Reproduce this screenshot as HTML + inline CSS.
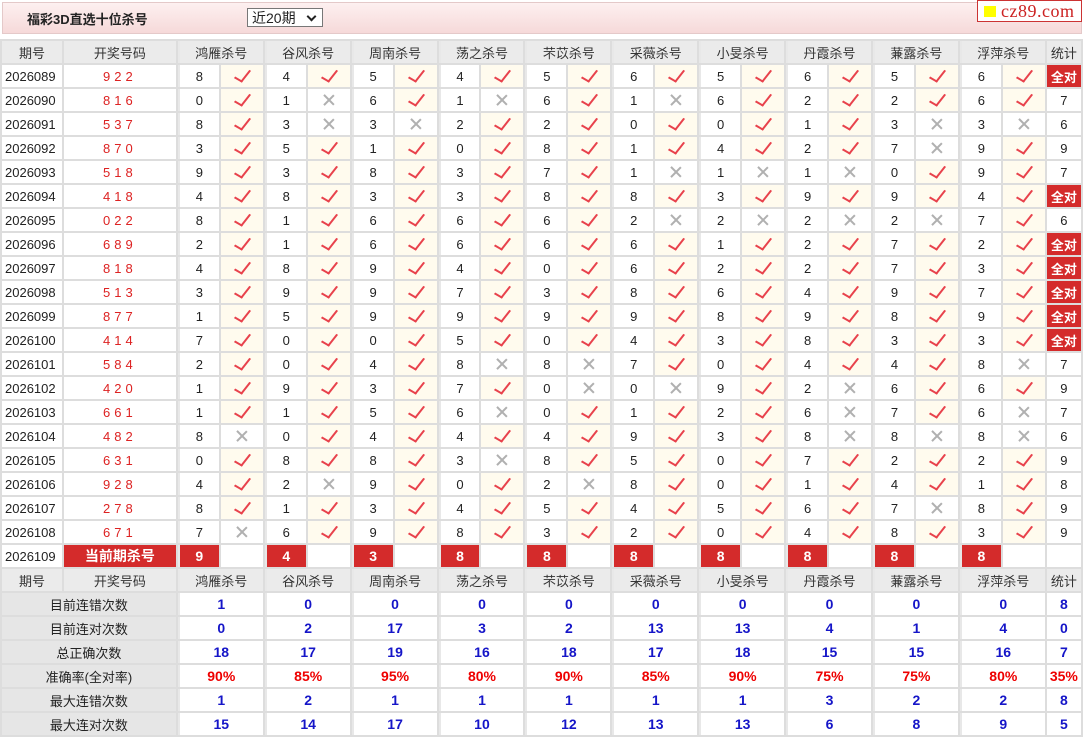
<!DOCTYPE html>
<html><head><meta charset="utf-8"><style>
body{margin:0;width:1083px;height:743px;background:#fff;font-family:"Liberation Sans","Noto Sans CJK SC",sans-serif;font-size:13px;color:#222;position:relative;overflow:hidden}
.top{position:absolute;left:2px;top:2px;width:1078px;height:30px;background:linear-gradient(#fdf0f0,#f6d9d9);border:1px solid #e4c9c9}
.title{position:absolute;left:24px;top:6px;font-weight:bold;font-size:13px;color:#222}
.sel{position:absolute;left:244px;top:5px;width:76px;height:19px;border:1px solid #777;background:#fff;font-size:14px;line-height:19px;padding-left:4px;box-sizing:border-box}
.sel:after{content:"";position:absolute;right:7px;top:4px;width:5px;height:5px;border-right:2px solid #222;border-bottom:2px solid #222;transform:rotate(45deg)}
.logo{position:absolute;left:977px;top:0;width:105px;height:22px;border:1px solid #c33;background:#fff;box-sizing:border-box;font-family:"Liberation Serif",serif;font-size:18px;color:#c22;line-height:20px;padding-left:23px;letter-spacing:0.5px;white-space:nowrap;overflow:hidden}
.logo:before{content:"";position:absolute;left:6px;top:5px;width:12px;height:11px;background:#ff0}
table{position:absolute;left:0;top:39px;border-collapse:separate;border-spacing:2px;background:#ddd;table-layout:fixed}
td{height:22px;padding:0;background:#fff;text-align:center;white-space:nowrap;overflow:hidden;position:relative}
tr.h td{background:#ebebeb;color:#333}
td.p{text-align:left;padding-left:3px;background:#fff}
tr.h td.p{text-align:center;padding:0}
td.n{color:#d22;letter-spacing:4px}
td.g{border-left:2px solid #e8e8e8}
td.y{background:#fffbee}
td.y:before{content:"";position:absolute;left:17px;top:2px;width:7px;height:13px;border-right:2px solid #e8424c;border-bottom:2px solid #e8424c;transform:rotate(38deg) skewY(-8deg)}
td.x:before,td.x:after{content:"";position:absolute;left:20px;top:4px;width:1.5px;height:14px;background:#b0b0b0;transform:rotate(45deg)}
td.x:after{transform:rotate(-45deg)}
td.a{background:#d42b2b;color:#fff;font-weight:bold}
td.r{background:#d42b2b;color:#fff;font-weight:bold;font-size:14px}
td.l{background:#e6e6e6}
td.b{color:#1515c8;font-weight:bold;font-size:14px}
td.pc{color:#e00;font-weight:bold;font-size:14px}
</style></head><body>
<div class="top"><div class="title">福彩3D直选十位杀号</div><div class="sel">近20期</div></div>
<div class="logo">cz89.com</div>
<table>
<colgroup><col style="width:60px"><col style="width:112px"><col style="width:41px"><col style="width:42px"><col style="width:41px"><col style="width:42px"><col style="width:41px"><col style="width:42px"><col style="width:41px"><col style="width:42px"><col style="width:41px"><col style="width:42px"><col style="width:41px"><col style="width:42px"><col style="width:41px"><col style="width:42px"><col style="width:41px"><col style="width:42px"><col style="width:41px"><col style="width:42px"><col style="width:41px"><col style="width:42px"><col style="width:34px"></colgroup>
<tr class="h"><td class="p">期号</td><td>开奖号码</td><td colspan="2" class="g">鸿雁杀号</td><td colspan="2" class="g">谷风杀号</td><td colspan="2" class="g">周南杀号</td><td colspan="2" class="g">荡之杀号</td><td colspan="2" class="g">芣苡杀号</td><td colspan="2" class="g">采薇杀号</td><td colspan="2" class="g">小旻杀号</td><td colspan="2" class="g">丹霞杀号</td><td colspan="2" class="g">蒹露杀号</td><td colspan="2" class="g">浮萍杀号</td><td>统计</td></tr>
<tr><td class="p">2026089</td><td class="n">922</td><td class="g">8</td><td class="y"></td><td class="g">4</td><td class="y"></td><td class="g">5</td><td class="y"></td><td class="g">4</td><td class="y"></td><td class="g">5</td><td class="y"></td><td class="g">6</td><td class="y"></td><td class="g">5</td><td class="y"></td><td class="g">6</td><td class="y"></td><td class="g">5</td><td class="y"></td><td class="g">6</td><td class="y"></td><td class="a">全对</td></tr>
<tr><td class="p">2026090</td><td class="n">816</td><td class="g">0</td><td class="y"></td><td class="g">1</td><td class="x"></td><td class="g">6</td><td class="y"></td><td class="g">1</td><td class="x"></td><td class="g">6</td><td class="y"></td><td class="g">1</td><td class="x"></td><td class="g">6</td><td class="y"></td><td class="g">2</td><td class="y"></td><td class="g">2</td><td class="y"></td><td class="g">6</td><td class="y"></td><td>7</td></tr>
<tr><td class="p">2026091</td><td class="n">537</td><td class="g">8</td><td class="y"></td><td class="g">3</td><td class="x"></td><td class="g">3</td><td class="x"></td><td class="g">2</td><td class="y"></td><td class="g">2</td><td class="y"></td><td class="g">0</td><td class="y"></td><td class="g">0</td><td class="y"></td><td class="g">1</td><td class="y"></td><td class="g">3</td><td class="x"></td><td class="g">3</td><td class="x"></td><td>6</td></tr>
<tr><td class="p">2026092</td><td class="n">870</td><td class="g">3</td><td class="y"></td><td class="g">5</td><td class="y"></td><td class="g">1</td><td class="y"></td><td class="g">0</td><td class="y"></td><td class="g">8</td><td class="y"></td><td class="g">1</td><td class="y"></td><td class="g">4</td><td class="y"></td><td class="g">2</td><td class="y"></td><td class="g">7</td><td class="x"></td><td class="g">9</td><td class="y"></td><td>9</td></tr>
<tr><td class="p">2026093</td><td class="n">518</td><td class="g">9</td><td class="y"></td><td class="g">3</td><td class="y"></td><td class="g">8</td><td class="y"></td><td class="g">3</td><td class="y"></td><td class="g">7</td><td class="y"></td><td class="g">1</td><td class="x"></td><td class="g">1</td><td class="x"></td><td class="g">1</td><td class="x"></td><td class="g">0</td><td class="y"></td><td class="g">9</td><td class="y"></td><td>7</td></tr>
<tr><td class="p">2026094</td><td class="n">418</td><td class="g">4</td><td class="y"></td><td class="g">8</td><td class="y"></td><td class="g">3</td><td class="y"></td><td class="g">3</td><td class="y"></td><td class="g">8</td><td class="y"></td><td class="g">8</td><td class="y"></td><td class="g">3</td><td class="y"></td><td class="g">9</td><td class="y"></td><td class="g">9</td><td class="y"></td><td class="g">4</td><td class="y"></td><td class="a">全对</td></tr>
<tr><td class="p">2026095</td><td class="n">022</td><td class="g">8</td><td class="y"></td><td class="g">1</td><td class="y"></td><td class="g">6</td><td class="y"></td><td class="g">6</td><td class="y"></td><td class="g">6</td><td class="y"></td><td class="g">2</td><td class="x"></td><td class="g">2</td><td class="x"></td><td class="g">2</td><td class="x"></td><td class="g">2</td><td class="x"></td><td class="g">7</td><td class="y"></td><td>6</td></tr>
<tr><td class="p">2026096</td><td class="n">689</td><td class="g">2</td><td class="y"></td><td class="g">1</td><td class="y"></td><td class="g">6</td><td class="y"></td><td class="g">6</td><td class="y"></td><td class="g">6</td><td class="y"></td><td class="g">6</td><td class="y"></td><td class="g">1</td><td class="y"></td><td class="g">2</td><td class="y"></td><td class="g">7</td><td class="y"></td><td class="g">2</td><td class="y"></td><td class="a">全对</td></tr>
<tr><td class="p">2026097</td><td class="n">818</td><td class="g">4</td><td class="y"></td><td class="g">8</td><td class="y"></td><td class="g">9</td><td class="y"></td><td class="g">4</td><td class="y"></td><td class="g">0</td><td class="y"></td><td class="g">6</td><td class="y"></td><td class="g">2</td><td class="y"></td><td class="g">2</td><td class="y"></td><td class="g">7</td><td class="y"></td><td class="g">3</td><td class="y"></td><td class="a">全对</td></tr>
<tr><td class="p">2026098</td><td class="n">513</td><td class="g">3</td><td class="y"></td><td class="g">9</td><td class="y"></td><td class="g">9</td><td class="y"></td><td class="g">7</td><td class="y"></td><td class="g">3</td><td class="y"></td><td class="g">8</td><td class="y"></td><td class="g">6</td><td class="y"></td><td class="g">4</td><td class="y"></td><td class="g">9</td><td class="y"></td><td class="g">7</td><td class="y"></td><td class="a">全对</td></tr>
<tr><td class="p">2026099</td><td class="n">877</td><td class="g">1</td><td class="y"></td><td class="g">5</td><td class="y"></td><td class="g">9</td><td class="y"></td><td class="g">9</td><td class="y"></td><td class="g">9</td><td class="y"></td><td class="g">9</td><td class="y"></td><td class="g">8</td><td class="y"></td><td class="g">9</td><td class="y"></td><td class="g">8</td><td class="y"></td><td class="g">9</td><td class="y"></td><td class="a">全对</td></tr>
<tr><td class="p">2026100</td><td class="n">414</td><td class="g">7</td><td class="y"></td><td class="g">0</td><td class="y"></td><td class="g">0</td><td class="y"></td><td class="g">5</td><td class="y"></td><td class="g">0</td><td class="y"></td><td class="g">4</td><td class="y"></td><td class="g">3</td><td class="y"></td><td class="g">8</td><td class="y"></td><td class="g">3</td><td class="y"></td><td class="g">3</td><td class="y"></td><td class="a">全对</td></tr>
<tr><td class="p">2026101</td><td class="n">584</td><td class="g">2</td><td class="y"></td><td class="g">0</td><td class="y"></td><td class="g">4</td><td class="y"></td><td class="g">8</td><td class="x"></td><td class="g">8</td><td class="x"></td><td class="g">7</td><td class="y"></td><td class="g">0</td><td class="y"></td><td class="g">4</td><td class="y"></td><td class="g">4</td><td class="y"></td><td class="g">8</td><td class="x"></td><td>7</td></tr>
<tr><td class="p">2026102</td><td class="n">420</td><td class="g">1</td><td class="y"></td><td class="g">9</td><td class="y"></td><td class="g">3</td><td class="y"></td><td class="g">7</td><td class="y"></td><td class="g">0</td><td class="x"></td><td class="g">0</td><td class="x"></td><td class="g">9</td><td class="y"></td><td class="g">2</td><td class="x"></td><td class="g">6</td><td class="y"></td><td class="g">6</td><td class="y"></td><td>9</td></tr>
<tr><td class="p">2026103</td><td class="n">661</td><td class="g">1</td><td class="y"></td><td class="g">1</td><td class="y"></td><td class="g">5</td><td class="y"></td><td class="g">6</td><td class="x"></td><td class="g">0</td><td class="y"></td><td class="g">1</td><td class="y"></td><td class="g">2</td><td class="y"></td><td class="g">6</td><td class="x"></td><td class="g">7</td><td class="y"></td><td class="g">6</td><td class="x"></td><td>7</td></tr>
<tr><td class="p">2026104</td><td class="n">482</td><td class="g">8</td><td class="x"></td><td class="g">0</td><td class="y"></td><td class="g">4</td><td class="y"></td><td class="g">4</td><td class="y"></td><td class="g">4</td><td class="y"></td><td class="g">9</td><td class="y"></td><td class="g">3</td><td class="y"></td><td class="g">8</td><td class="x"></td><td class="g">8</td><td class="x"></td><td class="g">8</td><td class="x"></td><td>6</td></tr>
<tr><td class="p">2026105</td><td class="n">631</td><td class="g">0</td><td class="y"></td><td class="g">8</td><td class="y"></td><td class="g">8</td><td class="y"></td><td class="g">3</td><td class="x"></td><td class="g">8</td><td class="y"></td><td class="g">5</td><td class="y"></td><td class="g">0</td><td class="y"></td><td class="g">7</td><td class="y"></td><td class="g">2</td><td class="y"></td><td class="g">2</td><td class="y"></td><td>9</td></tr>
<tr><td class="p">2026106</td><td class="n">928</td><td class="g">4</td><td class="y"></td><td class="g">2</td><td class="x"></td><td class="g">9</td><td class="y"></td><td class="g">0</td><td class="y"></td><td class="g">2</td><td class="x"></td><td class="g">8</td><td class="y"></td><td class="g">0</td><td class="y"></td><td class="g">1</td><td class="y"></td><td class="g">4</td><td class="y"></td><td class="g">1</td><td class="y"></td><td>8</td></tr>
<tr><td class="p">2026107</td><td class="n">278</td><td class="g">8</td><td class="y"></td><td class="g">1</td><td class="y"></td><td class="g">3</td><td class="y"></td><td class="g">4</td><td class="y"></td><td class="g">5</td><td class="y"></td><td class="g">4</td><td class="y"></td><td class="g">5</td><td class="y"></td><td class="g">6</td><td class="y"></td><td class="g">7</td><td class="x"></td><td class="g">8</td><td class="y"></td><td>9</td></tr>
<tr><td class="p">2026108</td><td class="n">671</td><td class="g">7</td><td class="x"></td><td class="g">6</td><td class="y"></td><td class="g">9</td><td class="y"></td><td class="g">8</td><td class="y"></td><td class="g">3</td><td class="y"></td><td class="g">2</td><td class="y"></td><td class="g">0</td><td class="y"></td><td class="g">4</td><td class="y"></td><td class="g">8</td><td class="y"></td><td class="g">3</td><td class="y"></td><td>9</td></tr>
<tr><td class="p">2026109</td><td class="a" style="font-size:14px">当前期杀号</td><td class="g r">9</td><td></td><td class="g r">4</td><td></td><td class="g r">3</td><td></td><td class="g r">8</td><td></td><td class="g r">8</td><td></td><td class="g r">8</td><td></td><td class="g r">8</td><td></td><td class="g r">8</td><td></td><td class="g r">8</td><td></td><td class="g r">8</td><td></td><td></td></tr>
<tr class="h"><td class="p">期号</td><td>开奖号码</td><td colspan="2" class="g">鸿雁杀号</td><td colspan="2" class="g">谷风杀号</td><td colspan="2" class="g">周南杀号</td><td colspan="2" class="g">荡之杀号</td><td colspan="2" class="g">芣苡杀号</td><td colspan="2" class="g">采薇杀号</td><td colspan="2" class="g">小旻杀号</td><td colspan="2" class="g">丹霞杀号</td><td colspan="2" class="g">蒹露杀号</td><td colspan="2" class="g">浮萍杀号</td><td>统计</td></tr>
<tr><td colspan="2" class="l">目前连错次数</td><td colspan="2" class="g b">1</td><td colspan="2" class="g b">0</td><td colspan="2" class="g b">0</td><td colspan="2" class="g b">0</td><td colspan="2" class="g b">0</td><td colspan="2" class="g b">0</td><td colspan="2" class="g b">0</td><td colspan="2" class="g b">0</td><td colspan="2" class="g b">0</td><td colspan="2" class="g b">0</td><td class="b">8</td></tr>
<tr><td colspan="2" class="l">目前连对次数</td><td colspan="2" class="g b">0</td><td colspan="2" class="g b">2</td><td colspan="2" class="g b">17</td><td colspan="2" class="g b">3</td><td colspan="2" class="g b">2</td><td colspan="2" class="g b">13</td><td colspan="2" class="g b">13</td><td colspan="2" class="g b">4</td><td colspan="2" class="g b">1</td><td colspan="2" class="g b">4</td><td class="b">0</td></tr>
<tr><td colspan="2" class="l">总正确次数</td><td colspan="2" class="g b">18</td><td colspan="2" class="g b">17</td><td colspan="2" class="g b">19</td><td colspan="2" class="g b">16</td><td colspan="2" class="g b">18</td><td colspan="2" class="g b">17</td><td colspan="2" class="g b">18</td><td colspan="2" class="g b">15</td><td colspan="2" class="g b">15</td><td colspan="2" class="g b">16</td><td class="b">7</td></tr>
<tr><td colspan="2" class="l">准确率(全对率)</td><td colspan="2" class="g pc">90%</td><td colspan="2" class="g pc">85%</td><td colspan="2" class="g pc">95%</td><td colspan="2" class="g pc">80%</td><td colspan="2" class="g pc">90%</td><td colspan="2" class="g pc">85%</td><td colspan="2" class="g pc">90%</td><td colspan="2" class="g pc">75%</td><td colspan="2" class="g pc">75%</td><td colspan="2" class="g pc">80%</td><td class="pc">35%</td></tr>
<tr><td colspan="2" class="l">最大连错次数</td><td colspan="2" class="g b">1</td><td colspan="2" class="g b">2</td><td colspan="2" class="g b">1</td><td colspan="2" class="g b">1</td><td colspan="2" class="g b">1</td><td colspan="2" class="g b">1</td><td colspan="2" class="g b">1</td><td colspan="2" class="g b">3</td><td colspan="2" class="g b">2</td><td colspan="2" class="g b">2</td><td class="b">8</td></tr>
<tr><td colspan="2" class="l">最大连对次数</td><td colspan="2" class="g b">15</td><td colspan="2" class="g b">14</td><td colspan="2" class="g b">17</td><td colspan="2" class="g b">10</td><td colspan="2" class="g b">12</td><td colspan="2" class="g b">13</td><td colspan="2" class="g b">13</td><td colspan="2" class="g b">6</td><td colspan="2" class="g b">8</td><td colspan="2" class="g b">9</td><td class="b">5</td></tr>
</table>
</body></html>
